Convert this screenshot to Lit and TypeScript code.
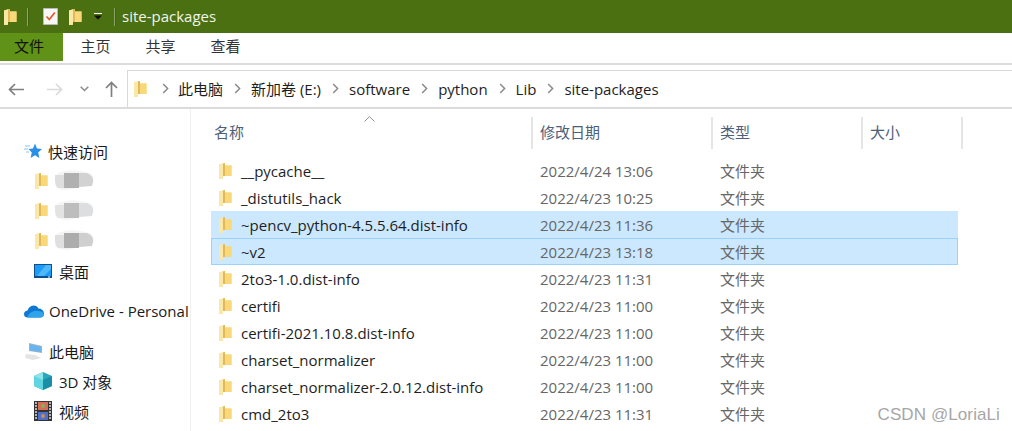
import { LitElement, html, css, svg } from "lit";
import { customElement } from "lit/decorators.js";

const folder = (cls = "fld") => html`<svg class=${cls} width="14" height="18" viewBox="0 0 14 18">
  <path d="M1 2.5 L7 1 L7 3.5 L13.5 3.5 L13.5 14 L5 14 L5 16.5 L1 17 Z" fill="#f6d77f"/>
  <path d="M1 2.5 L5 1.2 L5 16.8 L1 17 Z" fill="#fbe7a8"/>
  <path d="M5 1.5 L7 1 L7 14 L5 14 Z" fill="#e2b95a"/>
  <path d="M7 3.5 H13.5 V14 H7 Z" fill="#f8d878"/>
</svg>`;

const chev = html`<svg class="chev" width="7" height="11" viewBox="0 0 7 11"><path d="M1.2 1 L5.6 5.5 L1.2 10" fill="none" stroke="#8a8a8a" stroke-width="1.5"/></svg>`;

const rows: [string, string][] = [
  ["__pycache__", "2022/4/24 13:06"],
  ["_distutils_hack", "2022/4/23 10:25"],
  ["~pencv_python-4.5.5.64.dist-info", "2022/4/23 11:36"],
  ["~v2", "2022/4/23 13:18"],
  ["2to3-1.0.dist-info", "2022/4/23 11:31"],
  ["certifi", "2022/4/23 11:00"],
  ["certifi-2021.10.8.dist-info", "2022/4/23 11:00"],
  ["charset_normalizer", "2022/4/23 11:00"],
  ["charset_normalizer-2.0.12.dist-info", "2022/4/23 11:00"],
  ["cmd_2to3", "2022/4/23 11:31"],
];

const mosaic = (a: string, b: string, c: string, d: string) => html`<svg class="mosaic" width="40" height="22" viewBox="0 0 40 22">
  <path d="M4 3 Q14 -1 26 1 L36 3 Q41 7 39 13 L26 17 L14 20 Q2 20 1 14 Q0 6 4 3 Z" fill=${d}/>
  <rect x="10" y="3" width="15" height="15" fill=${b}/>
  <path d="M1 5 H10 V18 H4 Q1 15 1 10 Z" fill=${a}/>
  <path d="M25 3 H33 Q40 6 39 12 L38 16 L25 17 Z" fill=${c}/>
</svg>`;

@customElement("app-root")
export class AppRoot extends LitElement {
  static styles = css`
    :host { display: block; width: 1012px; height: 431px; overflow: hidden; position: relative; background: #fff;
      font-family: "Open Sans", "Noto Sans CJK SC", sans-serif; font-size: 15px; color: #1a1a1a; }
    svg { display: block; flex: none; }
    .title { height: 33px; background: #4a7012; display: flex; align-items: center; color: #f2f5ec; }
    .t1 { margin-left: 3px; }
    .tsep { width: 1px; height: 18px; background: #8ba56a; box-shadow: 1px 0 0 #3f6110; }
    .s1 { margin-left: 10px; }
    .t2 { margin-left: 15px; }
    .t3 { margin-left: 10px; }
    .t4 { margin-left: 12px; }
    .s2 { margin-left: 12px; }
    .tname { margin-left: 7px; line-height: 33px; }
    .tabs { height: 31px; border-bottom: 2px solid #dcdcdc; box-sizing: border-box; height: 32px; display: flex; align-items: flex-start; }
    .tab { height: 28px; line-height: 27px; padding: 0 17.5px; color: #333; }
    .tab.file { background: #5f9216; color: #111; padding: 0 16px 0 14px; width: 33px; }
    .nav { height: 44px; display: flex; align-items: center; box-sizing: border-box; border-bottom: 2px solid #dcdcdc; }
    .navbtns { width: 127px; display: flex; align-items: center; flex: none; padding-top: 6px; box-sizing: border-box; }
    .addr { flex: 1; height: 38px; margin-top: 5px; border: 1px solid #d9d9d9; border-right: none; box-sizing: border-box; display: flex; align-items: center; padding-left: 5px; }
    .crumb { margin-left: 27px; white-space: nowrap; color: #1e1e1e; }
    .chev { margin-left: 0; }
    .crumbitem { display: flex; align-items: center; }
    .addr .fld { margin-right: 15px; }
    .body { display: flex; height: 322px; overflow: hidden; }
    .side { width: 191px; flex: none; border-right: 1px solid #f0f0f0; box-sizing: border-box; padding-top: 27px; overflow: hidden; }
    .si { height: 30px; display: flex; align-items: center; white-space: nowrap; }
    .si.top { padding-left: 24px; gap: 6px; }
    .si.sub { padding-left: 34px; gap: 7px; }
    .si.fold { padding-left: 34px; gap: 6px; }
    .gap { margin-top: 10px; }
    .main { flex: 1; min-width: 0; position: relative; }
    .head { height: 48px; display: flex; padding-top: 8px; box-sizing: border-box; color: #4c607a; }
    .hc { height: 32px; line-height: 31px; box-sizing: border-box; border-right: 2px solid #e5e5e5; padding-left: 7px; }
    .h1 { width: 342px; padding-left: 23px; }
    .h2 { width: 180px; }
    .h3 { width: 150px; }
    .h4 { width: 100px; }
    .sort { position: absolute; left: 173px; top: 7px; }
    .lst { display: flex; flex-direction: column; }
    .row { height: 27px; width: 747px; margin-left: 20px; box-sizing: border-box; display: flex; align-items: center; color: #1e1e1e; }
    .row.sel { background: #cce8ff; }
    .row.foc { border: 1px solid #99d1ff; }
    .row .fld { margin-left: 7px; margin-right: 9px; }
    .row.foc .fld { margin-left: 6px; }
    .nm { width: 299px; white-space: nowrap; flex: none; }
    .dt { width: 180px; color: #666; flex: none; }
    .ty { color: #666; }
    .mark { position: absolute; right: 12px; bottom: 6px; font-family: "Liberation Sans", sans-serif; font-size: 17px; color: #a6a6a6; letter-spacing: 0.1px; }
  `;

  render() {
    return html`
      <div class="title">
        <span class="t1">${folder()}</span><div class="tsep s1"></div>
        <svg class="t2" width="15" height="17" viewBox="0 0 15 17"><path d="M.5.5H14.5V16.5H.5Z" fill="#f7f7f7" stroke="#b9b9b9"/><path d="M3.5 8.5L6.3 11.5L11.8 4.5" fill="none" stroke="#e8562a" stroke-width="1.7"/></svg>
        <span class="t3">${folder()}</span>
        <svg class="t4" width="8" height="7" viewBox="0 0 8 7"><rect width="8" height="1" fill="#fff"/><path d="M0 2.5H8L4 6.8Z" fill="#111"/></svg>
        <div class="tsep s2"></div>
        <span class="tname">site-packages</span>
      </div>
      <div class="tabs">
        <div class="tab file">文件</div>
        <div class="tab">主页</div><div class="tab">共享</div><div class="tab">查看</div>
      </div>
      <div class="nav">
        <div class="navbtns">
          <svg style="margin-left:8px" width="16" height="13" viewBox="0 0 16 13"><path d="M16 6.5H1.5M7 1L1.5 6.5L7 12" fill="none" stroke="#7f7f7f" stroke-width="1.7"/></svg>
          <svg style="margin-left:23px" width="16" height="13" viewBox="0 0 16 13"><path d="M0 6.5H14.5M9 1L14.5 6.5L9 12" fill="none" stroke="#dadada" stroke-width="1.7"/></svg>
          <svg style="margin-left:17px" width="9" height="6" viewBox="0 0 9 6"><path d="M.7.7L4.5 4.5L8.3.7" fill="none" stroke="#8a8a8a" stroke-width="1.5"/></svg>
          <svg style="margin-left:16px" width="13" height="16" viewBox="0 0 13 16"><path d="M6.5 16V1.5M1 7L6.5 1.5L12 7" fill="none" stroke="#7f7f7f" stroke-width="1.7"/></svg>
        </div>
        <div class="addr">
          ${folder()}
          ${chev}<span class="crumb" style="margin-left:9px">此电脑</span>
          <span style="margin-left:11px">${chev}</span><span class="crumb" style="margin-left:10px">新加卷 (E:)</span>
          <span style="margin-left:11px">${chev}</span><span class="crumb" style="margin-left:10px">software</span>
          <span style="margin-left:11px">${chev}</span><span class="crumb" style="margin-left:10px">python</span>
          <span style="margin-left:11px">${chev}</span><span class="crumb" style="margin-left:10px">Lib</span>
          <span style="margin-left:11px">${chev}</span><span class="crumb" style="margin-left:10px">site-packages</span>
        </div>
      </div>
      <div class="body">
        <div class="side">
          <div class="si top">
            <svg width="18" height="16" viewBox="0 0 18 16"><path d="M11 .5L13 5.5L18 6L14.2 9.5L15.4 15L11 12.2L6.6 15L7.8 9.5L4.5 6L9 5.5Z" fill="#2b8fe6"/><path d="M1 3H6M0 6H4M2 9H5" stroke="#8cc4ef" stroke-width="1"/></svg>
            <span>快速访问</span>
          </div>
          <div class="si fold">${folder()}${mosaic("#dedede", "#b0b0b0", "#d2d2d2", "#f4f4f4")}</div>
          <div class="si fold">${folder()}${mosaic("#e3e3e3", "#bdbdbd", "#dcdee0", "#f5f5f5")}</div>
          <div class="si fold">${folder()}${mosaic("#dfdfdf", "#acacac", "#cfcfcf", "#f4f4f4")}</div>
          <div class="si sub">
            <svg width="18" height="14" viewBox="0 0 18 14"><rect width="18" height="14" fill="#0d4f8f"/><rect x="1" y="1" width="16" height="11" fill="#1e9cf5"/><path d="M3 12L12 1H17V5L10 12Z" fill="#4fb8fb"/><rect x="14" y="12.5" width="2" height="1" fill="#fff"/></svg>
            <span>桌面</span>
          </div>
          <div class="si top gap" style="gap:5px">
            <svg width="20" height="13" viewBox="0 0 20 13"><path d="M4 12.5Q0 12.5 0 9Q0 6 3.5 5.5Q5 1 9.5 0.5Q13 .5 14.5 3.5Q19 3.5 20 8Q20 12.5 16 12.5Z" fill="#0f78d4"/><path d="M4 12.5Q2 12.5 6 8Q11 5 14 6Q18 6 20 9Q20 12.5 16 12.5Z" fill="#2ea5ea"/></svg>
            <span>OneDrive - Personal</span>
          </div>
          <div class="si top gap">
            <svg width="19" height="19" viewBox="0 0 19 19"><path d="M5 1L18 4V11L5 9Z" fill="#9fb4c8"/><path d="M6 2.2L17 4.7V10L6 8.2Z" fill="#68b4ee"/><path d="M2 12L11 13L17 16L9 18L1 16Z" fill="#e4e4e4"/></svg>
            <span>此电脑</span>
          </div>
          <div class="si sub">
            <svg width="18" height="18" viewBox="0 0 18 18"><path d="M9 0L18 4V14L9 18L0 14V4Z" fill="#2aa9bb"/><path d="M0 4L9 0L9 8L0 11Z" fill="#8fe3ea"/><path d="M0 4L9 8V18L0 14Z" fill="#5fd6df"/><path d="M9 8L18 4V14L9 18Z" fill="#1a8ea6"/></svg>
            <span>3D 对象</span>
          </div>
          <div class="si sub">
            <svg width="18" height="20" viewBox="0 0 18 20"><rect width="18" height="20" fill="#333"/><rect x="4" y="1" width="10" height="8" fill="#d86d55"/><rect x="4" y="11" width="10" height="8" fill="#4a70c8"/><circle cx="9" cy="5" r="2" fill="#7bb75c"/><circle cx="9" cy="15" r="2" fill="#d8884e"/><path d="M1 2H3M1 5H3M1 8H3M1 11H3M1 14H3M1 17H3M15 2H17M15 5H17M15 8H17M15 11H17M15 14H17M15 17H17" stroke="#ddd" stroke-width="1.4"/></svg>
            <span>视频</span>
          </div>
        </div>
        <div class="main">
          <svg class="sort" width="11" height="6" viewBox="0 0 11 6"><path d="M.5 5.5L5.5.7L10.5 5.5" fill="none" stroke="#8e8e8e"/></svg>
          <div class="head">
            <div class="hc h1">名称</div><div class="hc h2">修改日期</div><div class="hc h3">类型</div><div class="hc h4">大小</div>
          </div>
          <div class="lst">
            ${rows.map(([n, d], i) => html`
              <div class="row ${i === 2 || i === 3 ? "sel" : ""} ${i === 3 ? "foc" : ""}">
                ${folder()}<span class="nm">${n}</span><span class="dt">${d}</span><span class="ty">文件夹</span>
              </div>`)}
          </div>
        </div>
      </div>
      <div class="mark">CSDN @LoriaLi</div>
    `;
  }
}
